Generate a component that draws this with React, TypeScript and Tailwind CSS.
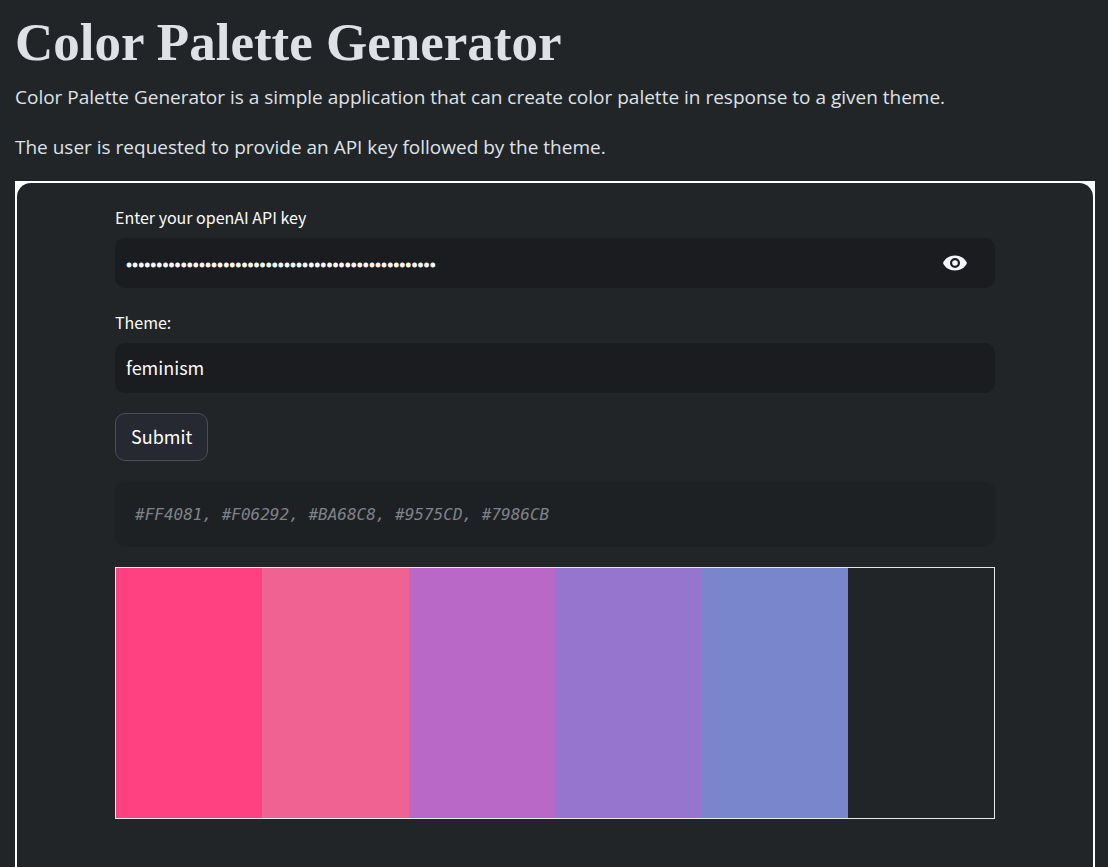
import { useState } from "react";

const palette = [
  { hex: "#FF4081", swatch: "bg-[#ff4081]" },
  { hex: "#F06292", swatch: "bg-[#f06292]" },
  { hex: "#BA68C8", swatch: "bg-[#ba68c8]" },
  { hex: "#9575CD", swatch: "bg-[#9575cd]" },
  { hex: "#7986CB", swatch: "bg-[#7986cb]" },
];

function EyeIcon() {
  return (
    <svg viewBox="0 0 24 16" className="h-4 w-6" aria-hidden="true">
      <path
        fill="#f4f5fa"
        fillRule="evenodd"
        d="M12 .5C6.400 .5 2 3.400 0 8c2 4.600 6.400 7.500 12 7.500S22 12.600 24 8C22 3.400 17.600.5 12 .5ZM12 13a5 5 0 1 1 0-10 5 5 0 0 1 0 10Zm0-2.200a2.800 2.800 0 1 0 0-5.600 2.800 2.800 0 0 0 0 5.600Z"
      />
    </svg>
  );
}

export default function App() {
  const [apiKey, setApiKey] = useState("k".repeat(51));
  const [theme, setTheme] = useState("feminism");
  const [visible, setVisible] = useState(false);

  return (
    <main className="flex min-h-screen flex-col bg-[#212528] pr-[13px] pl-[15px] font-['Open_Sans',sans-serif] text-[#dee2e6]">
      <h1 className="pt-3 font-['Liberation_Serif',serif] text-[53px] leading-[60px] font-bold">
        Color Palette Generator
      </h1>
      <p className="pt-[10px] text-[19px] leading-[30px]">
        Color Palette Generator is a simple application that can create color palette in response to a given theme.
      </p>
      <p className="pt-5 pb-[19px] text-[19px] leading-[30px]">
        The user is requested to provide an API key followed by the theme.
      </p>

      <section className="flex flex-1 flex-col border-2 border-b-0 border-white bg-white">
        <div className="flex-1 rounded-t-[14px] bg-[#212528] pt-6 pb-12">
          <form
            className="mx-auto w-full max-w-[880px] font-['Noto_Sans_CJK_SC',sans-serif] text-[#fafafa]"
            onSubmit={(event) => event.preventDefault()}
          >
            <label htmlFor="api-key" className="block pb-[11px] text-base leading-5">
              Enter your openAI API key
            </label>
            <div className="flex h-[50px] items-center rounded-[10px] bg-[#1a1c1f] pr-7 pl-[11px]">
              <input
                id="api-key"
                type={visible ? "text" : "password"}
                value={apiKey}
                onChange={(event) => setApiKey(event.target.value)}
                className="h-full min-w-0 flex-1 bg-transparent pt-1 font-[Roboto,sans-serif] text-lg outline-none [-webkit-text-stroke:1px_#fafafa]"
              />
              <button type="button" aria-label="Show password text" onClick={() => setVisible(!visible)}>
                <EyeIcon />
              </button>
            </div>

            <label htmlFor="theme" className="block pt-6 pb-[11px] text-base leading-5">
              Theme:
            </label>
            <input
              id="theme"
              type="text"
              value={theme}
              onChange={(event) => setTheme(event.target.value)}
              className="block h-[50px] w-full rounded-[10px] bg-[#1a1c1f] px-[11px] pb-[2px] text-lg outline-none"
            />

            <button
              type="submit"
              className="mt-5 h-12 rounded-[10px] border border-[#4c4f55] bg-[#262931] px-[15px] pb-[2px] text-lg text-white"
            >
              Submit
            </button>

            <pre className="mt-[21px] rounded-[10px] bg-[#1e2124] px-5 py-5 font-['DejaVu_Sans_Mono',monospace] text-base leading-[25px] text-[#80838a] italic">
              {palette.map((color) => color.hex).join(", ")}
            </pre>

            <div className="mt-5 grid h-[252px] grid-cols-6 border border-[#e6e7e9]">
              {palette.map((color) => (
                <div key={color.hex} className={color.swatch} />
              ))}
            </div>
          </form>
        </div>
      </section>
    </main>
  );
}
